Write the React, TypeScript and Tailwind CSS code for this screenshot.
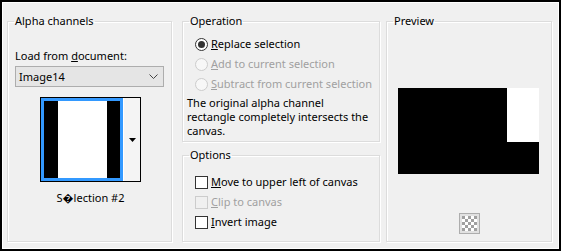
import React from "react";

const Radio = ({ checked, disabled }: { checked?: boolean; disabled?: boolean }) => (
  <span
    className={`flex h-[13px] w-[13px] shrink-0 items-center justify-center rounded-full border ${
      disabled ? "border-[#cccccc] bg-[#f7f7f7]" : "border-[#333333] bg-white"
    }`}
  >
    {checked && <span className="h-[7px] w-[7px] rounded-full bg-[#333333]" />}
  </span>
);

const Check = ({ disabled }: { disabled?: boolean }) => (
  <span
    className={`block h-[13px] w-[13px] shrink-0 border ${
      disabled ? "border-[#cccccc] bg-[#f0f0f0]" : "border-[#333333] bg-white"
    }`}
  />
);

const Group = ({
  title,
  className,
  children,
}: {
  title: string;
  className: string;
  children: React.ReactNode;
}) => (
  <fieldset
    className={`border border-[#dcdcdc] shadow-[inset_1px_1px_0_#ffffff,1px_1px_0_#ffffff] ${className}`}
  >
    <legend className="ml-[6px] px-[1px] leading-4">{title}</legend>
    {children}
  </fieldset>
);

const App = () => {
  return (
    <div
      className="h-[251px] w-[561px] border-2 border-black bg-[#f0f0f0] text-[11px] text-black"
      style={{ fontFamily: '"Noto Sans", "DejaVu Sans", sans-serif' }}
    >
      <div className="flex h-full border border-white pl-[4px] pt-[10px]">
        {/* Alpha channels */}
        <Group title="Alpha channels" className="h-[229px] w-[165px]">
          <div className="px-[7px]">
            <div className="mt-[19px] h-4 leading-4">
              Load from <u>d</u>ocument:
            </div>
            <div className="mt-[2px] flex h-[21px] w-[149px] items-center justify-between border border-[#adadad] bg-[#e5e5e5] pl-[3px] pr-[5px]">
              <span className="leading-4">Image14</span>
              <svg width="9" height="5" viewBox="0 0 9 5">
                <polyline points="0.5,0.5 4.5,4.5 8.5,0.5" fill="none" stroke="#444" strokeWidth="1" />
              </svg>
            </div>
            <div className="ml-[25px] mt-[10px] flex w-[101px] flex-col items-center">
              <div className="flex h-[85px] w-[101px] border border-black bg-[#f0f0f0]">
                <div className="flex h-[83px] w-[82px] border-[3px] border-[#3399ff] bg-white">
                  <div className="w-[14px] bg-black" />
                  <div className="flex-1 bg-white" />
                  <div className="w-[13px] bg-black" />
                </div>
                <div className="flex flex-1 items-center justify-center border-l border-white bg-[#f4f4f4]">
                  <svg width="7" height="4" viewBox="0 0 7 4">
                    <polygon points="0,0 7,0 3.5,4" fill="#000" />
                  </svg>
                </div>
              </div>
              <div className="mt-[8px] h-4 leading-4">S{"\uFFFD"}lection #2</div>
            </div>
          </div>
        </Group>

        {/* Operation + Options */}
        <div className="ml-[10px] flex w-[198px] flex-col">
          <Group title="Operation" className="h-[129px]">
            <div className="mt-[5px] pl-[12px]">
              <div className="flex h-5 items-center gap-[3px]">
                <Radio checked />
                <span className="leading-4">
                  <u>R</u>eplace selection
                </span>
              </div>
              <div className="flex h-5 items-center gap-[3px] text-[#a0a0a0]">
                <Radio disabled />
                <span className="leading-4">
                  <u>A</u>dd to current selection
                </span>
              </div>
              <div className="flex h-5 items-center gap-[3px] text-[#a0a0a0]">
                <Radio disabled />
                <span className="leading-4">
                  <u>S</u>ubtract from current selection
                </span>
              </div>
            </div>
            <p className="mt-[2px] pl-[4px] leading-[14px]">
              The original alpha channel
              <br />
              rectangle completely intersects the
              <br />
              canvas.
            </p>
          </Group>
          <Group title="Options" className="mt-[5px] h-[95px]">
            <div className="mt-[9px] pl-[12px]">
              <div className="flex h-5 items-center gap-[3px]">
                <Check />
                <span className="leading-4">
                  <u>M</u>ove to upper left of canvas
                </span>
              </div>
              <div className="flex h-5 items-center gap-[3px] text-[#a0a0a0]">
                <Check disabled />
                <span className="leading-4">
                  <u>C</u>lip to canvas
                </span>
              </div>
              <div className="flex h-5 items-center gap-[3px]">
                <Check />
                <span className="leading-4">
                  <u>I</u>nvert image
                </span>
              </div>
            </div>
          </Group>
        </div>

        {/* Preview */}
        <Group title="Preview" className="ml-[6px] h-[229px] w-[166px]">
          <div className="flex flex-col items-center">
            <div className="ml-[-1px] mt-[59px] flex h-[86px] w-[141px] justify-end bg-black">
              <div className="h-[54px] w-[32px] bg-white" />
            </div>
            <div className="mt-[39px] flex h-[21px] w-[21px] items-center justify-center border border-[#adadad] bg-[#e1e1e1]">
              <svg width="15" height="15" viewBox="0 0 15 15">
                <rect width="15" height="15" fill="#ffffff" />
                {[0, 1, 2, 3, 4].map((r) =>
                  [0, 1, 2, 3, 4].map((c) =>
                    (r + c) % 2 === 0 ? (
                      <rect key={`${r}-${c}`} x={c * 3} y={r * 3} width="3" height="3" fill="#a0a0a0" />
                    ) : null
                  )
                )}
              </svg>
            </div>
          </div>
        </Group>
      </div>
    </div>
  );
};

export default App;
